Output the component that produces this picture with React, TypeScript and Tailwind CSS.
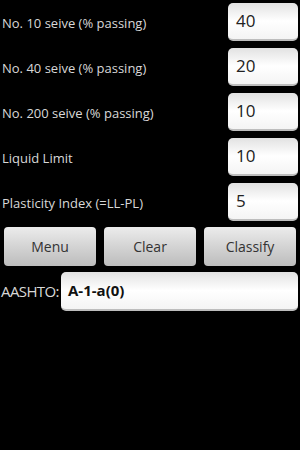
const rows = [
  { label: "No. 10 seive (% passing)", value: "40" },
  { label: "No. 40 seive (% passing)", value: "20" },
  { label: "No. 200 seive (% passing)", value: "10" },
  { label: "Liquid Limit", value: "10" },
  { label: "Plasticity Index (=LL-PL)", value: "5" },
]

export default function App() {
  return (
    <div
      className="w-[300px] h-[450px] bg-black pt-[3px]"
      style={{ fontFamily: '"Open Sans", "Noto Sans", sans-serif' }}
    >
      <div className="flex flex-col gap-[7px]">
        {rows.map((r) => (
          <div key={r.label} className="flex items-center justify-between pl-[2px] pr-[2px]">
            <span className="text-[13px] text-[#d8d8d8] pt-[4px]">{r.label}</span>
            <div className="w-[70px] h-[38px] rounded-[5px] bg-gradient-to-b from-[#e2e2e2] via-white to-[#f4f4f4] border-b-2 border-[#bdbdbd] flex items-center pl-[8px] text-[17px] text-[#222]">
              {r.value}
            </div>
          </div>
        ))}
      </div>

      <div className="grid grid-cols-3 gap-[8px] px-[4px] mt-[6px]">
        {["Menu", "Clear", "Classify"].map((b) => (
          <button
            key={b}
            className="h-[39px] rounded-[4px] bg-gradient-to-b from-[#ececec] to-[#bcbcbc] text-[14px] text-[#333] flex items-center justify-center"
          >
            {b}
          </button>
        ))}
      </div>

      <div className="flex items-center mt-[6px] pr-[2px]">
        <span className="w-[61px] pl-[1px] text-[15px] text-[#d8d8d8] tracking-[-0.6px]">AASHTO:</span>
        <div className="flex-1 h-[39px] rounded-[5px] bg-gradient-to-b from-[#e2e2e2] via-white to-[#f4f4f4] border-b-2 border-[#bdbdbd] flex items-center pl-[7px] text-[15px] font-bold text-[#111]">
          A-1-a(0)
        </div>
      </div>
    </div>
  )
}
